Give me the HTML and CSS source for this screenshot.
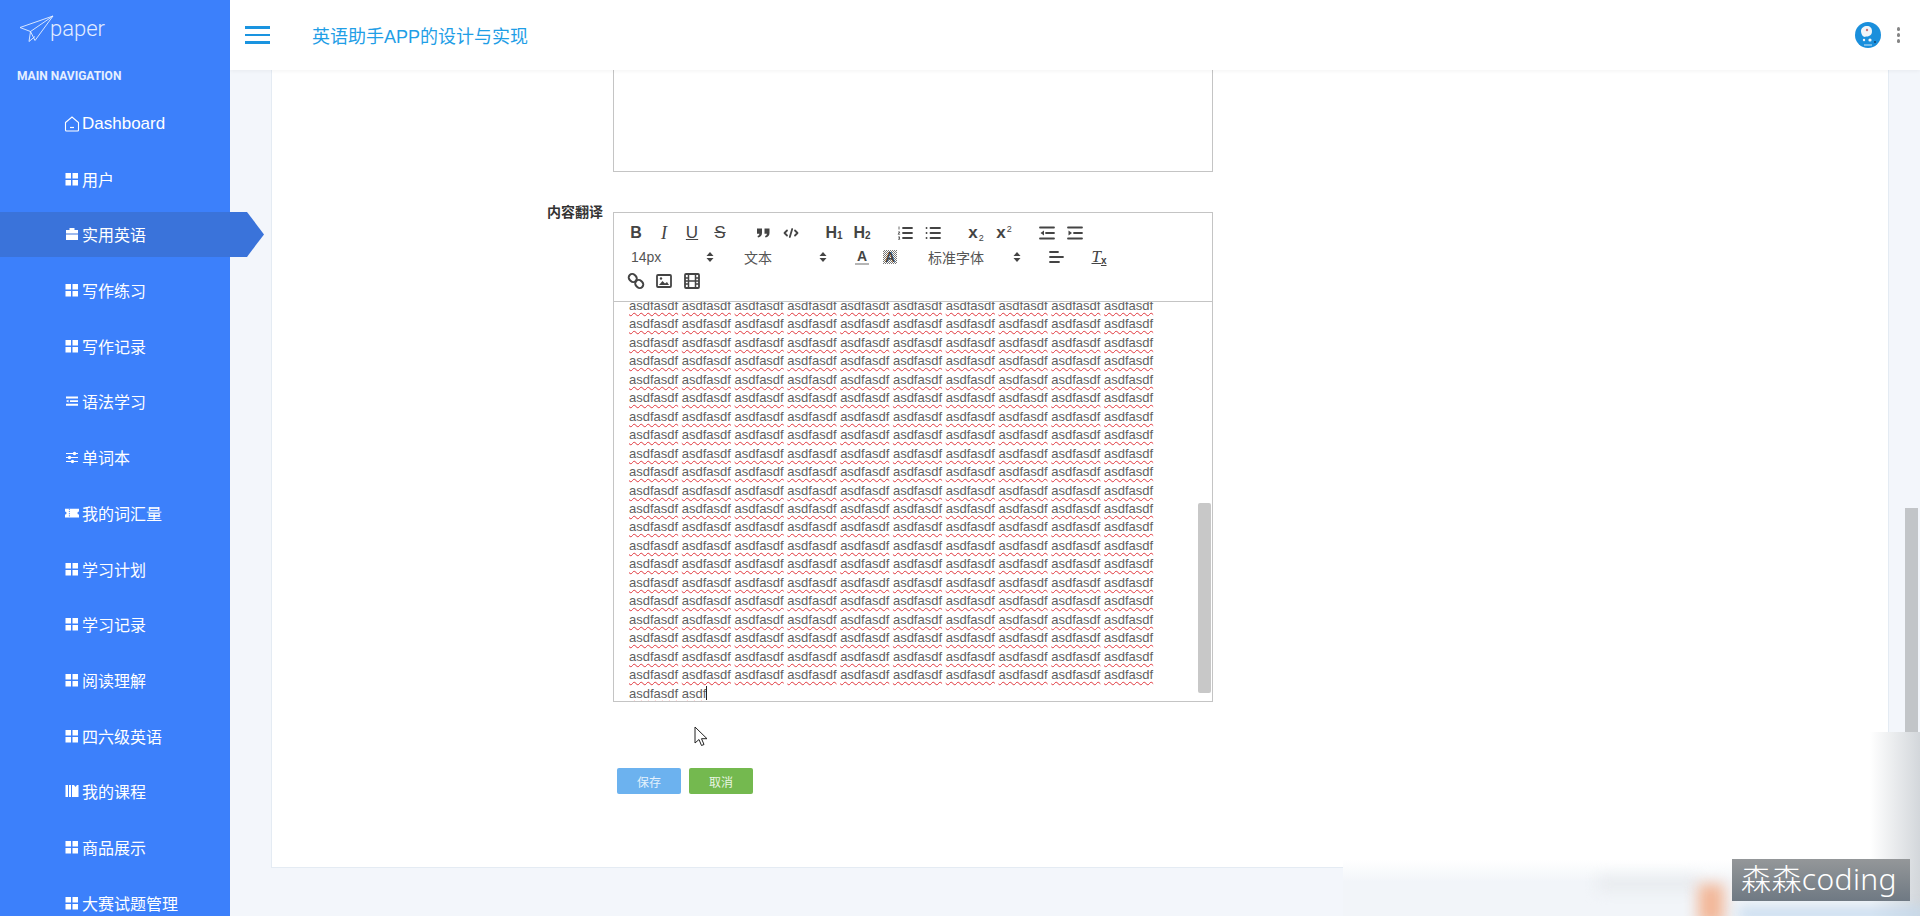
FILE: index.html
```html
<!DOCTYPE html>
<html lang="zh">
<head>
    <meta charset="UTF-8">
    <title>英语助手APP的设计与实现</title>
    <link rel="stylesheet" href="styles.css">
</head>
<body>

<svg class="icon-defs" width="0" height="0">
    <symbol id="i-grid" viewBox="0 0 14 14"><path d="M0.5 1h5.5v5.5h-5.5zM7.5 1h5.5v5.5h-5.5zM0.5 8h5.5v5.5h-5.5zM7.5 8h5.5v5.5h-5.5z" fill="#fff"/></symbol>
    <symbol id="i-home" viewBox="0 0 16 16"><path d="M1.5 6.5L8 1l6.5 5.5v7.5a1 1 0 0 1-1 1h-11a1 1 0 0 1-1-1z" fill="none" stroke="#fff" stroke-width="1.1"/><path d="M6 11.5h4" stroke="#fff" stroke-width="1.2"/></symbol>
    <symbol id="i-case" viewBox="0 0 14 14"><path d="M4.5 3V1h5V3h3.5v3.5H1V3zM1 7.5h12V13H1z" fill="#fff"/></symbol>
    <symbol id="i-list" viewBox="0 0 14 14"><path d="M1 2.5h12v2H1zM5 6.2h8v1.8H5zM1 9.8h12v2H1zM1 7.1l2.5-1.3v2.6z" fill="#fff"/></symbol>
    <symbol id="i-sliders" viewBox="0 0 14 14"><path d="M1 3.5h12M1 7.5h12M1 11.5h12" stroke="#fff" stroke-width="1.1"/><circle cx="9.5" cy="3.5" r="1.7" fill="#fff"/><circle cx="4.5" cy="7.5" r="1.7" fill="#fff"/><circle cx="7.5" cy="11.5" r="1.7" fill="#fff"/></symbol>
    <symbol id="i-ticket" viewBox="0 0 16 14"><path d="M0 2h16v3.2a1.8 1.8 0 0 0 0 3.6V12H0V8.8a1.8 1.8 0 0 0 0-3.6z" fill="#fff"/><path d="M5 2v10" stroke="#3c80fb" stroke-width="1" stroke-dasharray="1.5 1"/></symbol>
    <symbol id="i-book" viewBox="0 0 14 14"><path d="M0.5 1h2.5v12H0.5zM4 1h2v12H4zM7 1h2l1.5 2L12 1h1.5v12H7z" fill="#fff"/></symbol>
</svg>

<aside class="sidebar">
    <div class="logo">
        <svg class="logo-plane" width="36" height="30" viewBox="0 0 36 30">
            <path d="M1 12.5L34 1 16 25.5 11.5 16.5zM34 1L11.5 16.5 10 26.5 16 21.5" fill="none" stroke="#e8f0ff" stroke-width="0.9" stroke-linejoin="round"/>
        </svg>
        <span class="logo-text">paper</span>
    </div>
    <div class="nav-title">MAIN NAVIGATION</div>
    <ul class="nav">
        <li class="nav-item nav-dash"><svg class="nav-icon"><use href="#i-home"/></svg>Dashboard</li>
        <li class="nav-item"><svg class="nav-icon"><use href="#i-grid"/></svg>用户</li>
        <li class="nav-item active"><svg class="nav-icon"><use href="#i-case"/></svg>实用英语</li>
        <li class="nav-item"><svg class="nav-icon"><use href="#i-grid"/></svg>写作练习</li>
        <li class="nav-item"><svg class="nav-icon"><use href="#i-grid"/></svg>写作记录</li>
        <li class="nav-item"><svg class="nav-icon"><use href="#i-list"/></svg>语法学习</li>
        <li class="nav-item"><svg class="nav-icon"><use href="#i-sliders"/></svg>单词本</li>
        <li class="nav-item"><svg class="nav-icon"><use href="#i-ticket"/></svg>我的词汇量</li>
        <li class="nav-item"><svg class="nav-icon"><use href="#i-grid"/></svg>学习计划</li>
        <li class="nav-item"><svg class="nav-icon"><use href="#i-grid"/></svg>学习记录</li>
        <li class="nav-item"><svg class="nav-icon"><use href="#i-grid"/></svg>阅读理解</li>
        <li class="nav-item"><svg class="nav-icon"><use href="#i-grid"/></svg>四六级英语</li>
        <li class="nav-item"><svg class="nav-icon"><use href="#i-book"/></svg>我的课程</li>
        <li class="nav-item"><svg class="nav-icon"><use href="#i-grid"/></svg>商品展示</li>
        <li class="nav-item"><svg class="nav-icon"><use href="#i-grid"/></svg>大赛试题管理</li>
    </ul>
</aside>

<div class="main">
    <header class="topbar">
        <div class="burger"><span></span><span></span><span></span></div>
        <h1 class="page-title">英语助手APP的设计与实现</h1>
        <div class="topbar-right">
            <svg class="avatar" width="26" height="26" viewBox="0 0 26 26">
                <circle cx="13" cy="13" r="13" fill="#1a8fdc"/>
                <path d="M6 9c0-3 3-5 6-5s5 2 5 5-1 4-3 5c-2 1-3 0-4 1-2 0-4-3-4-6z" fill="#f2f5f8"/>
                <circle cx="12" cy="8" r="1.2" fill="#c9737a"/>
                <circle cx="9" cy="18" r="1.2" fill="#f2f5f8"/>
                <circle cx="15" cy="18" r="1.6" fill="#f2f5f8"/>
                <circle cx="20" cy="20" r="1" fill="#12406b"/>
                <path d="M9 23h8" stroke="#cfe6f7" stroke-width="1"/>
            </svg>
            <div class="more-dots"><span></span><span></span><span></span></div>
        </div>
    </header>

    <main class="content">
        <section class="card">
            <div class="form-row">
                <label class="form-label"></label>
                <div class="blank-box"></div>
            </div>

            <div class="form-row">
                <label class="form-label">内容翻译</label>
                <div class="editor">
                    <div class="toolbar">
                        <span class="formats">
                            <button class="tb tb-b">B</button>
                            <button class="tb tb-i">I</button>
                            <button class="tb tb-u">U</button>
                            <button class="tb tb-s">S</button>
                        </span>
                        <span class="formats">
                            <button class="tb"><svg width="18" height="18" viewBox="0 0 18 18"><path d="M3 4.5h5v4.5c0 2.5-1.5 4-4 4.5l-.5-1.5c1.1-.3 1.9-1 1.9-2.2H3zM10.5 4.5h5v4.5c0 2.5-1.5 4-4 4.5l-.5-1.5c1.1-.3 1.9-1 1.9-2.2h-2.4z" fill="#444"/></svg></button>
                            <button class="tb"><svg width="18" height="18" viewBox="0 0 18 18"><path d="M5 6.5L2.5 9 5 11.5M13 6.5L15.5 9 13 11.5M10.2 5L7.8 13" fill="none" stroke="#444" stroke-width="1.8" stroke-linecap="round" stroke-linejoin="round"/></svg></button>
                        </span>
                        <span class="formats">
                            <button class="tb tb-h">H<small>1</small></button>
                            <button class="tb tb-h">H<small>2</small></button>
                        </span>
                        <span class="formats">
                            <button class="tb"><svg width="18" height="18" viewBox="0 0 18 18"><path d="M7 4h9M7 9h9M7 14h9" stroke="#444" stroke-width="1.8" stroke-linecap="round"/><path d="M3 2.5v3M2 8h2l-2 2.2h2.2M2 13h2l-1 1 1 1.2H2" fill="none" stroke="#444" stroke-width="0.8"/></svg></button>
                            <button class="tb"><svg width="18" height="18" viewBox="0 0 18 18"><path d="M6.5 4H16M6.5 9H16M6.5 14H16M2.5 4h.1M2.5 9h.1M2.5 14h.1" stroke="#444" stroke-width="1.8" stroke-linecap="round"/></svg></button>
                        </span>
                        <span class="formats">
                            <button class="tb tb-script">x<small class="low">2</small></button>
                            <button class="tb tb-script">x<small class="high">2</small></button>
                        </span>
                        <span class="formats">
                            <button class="tb"><svg width="18" height="18" viewBox="0 0 18 18"><path d="M2 3.5h14M8 9h8M2 14.5h14" stroke="#444" stroke-width="1.8" stroke-linecap="round"/><path d="M6 6.5L2.5 9 6 11.5z" fill="#444"/></svg></button>
                            <button class="tb"><svg width="18" height="18" viewBox="0 0 18 18"><path d="M2 3.5h14M8 9h8M2 14.5h14" stroke="#444" stroke-width="1.8" stroke-linecap="round"/><path d="M2.5 6.5L6 9 2.5 11.5z" fill="#444"/></svg></button>
                        </span>
                        <span class="formats">
                            <span class="picker">14px<svg class="picker-arrow" width="8" height="12" viewBox="0 0 8 12"><path d="M4 1l3.5 4H.5zM4 11L.5 7h7z" fill="#444"/></svg></span>
                        </span>
                        <span class="formats">
                            <span class="picker">文本<svg class="picker-arrow" width="8" height="12" viewBox="0 0 8 12"><path d="M4 1l3.5 4H.5zM4 11L.5 7h7z" fill="#444"/></svg></span>
                        </span>
                        <span class="formats">
                            <button class="tb tb-color"><span>A</span></button>
                            <button class="tb tb-bg"><span>A</span></button>
                        </span>
                        <span class="formats">
                            <span class="picker picker-font">标准字体<svg class="picker-arrow" width="8" height="12" viewBox="0 0 8 12"><path d="M4 1l3.5 4H.5zM4 11L.5 7h7z" fill="#444"/></svg></span>
                        </span>
                        <span class="formats">
                            <button class="tb"><svg width="18" height="18" viewBox="0 0 18 18"><path d="M3 4h8M3 9h13M3 14h9" stroke="#444" stroke-width="1.8" stroke-linecap="round"/></svg></button>
                        </span>
                        <span class="formats">
                            <button class="tb tb-clean">T<small>x</small></button>
                        </span>
                        <span class="formats">
                            <button class="tb"><svg width="18" height="18" viewBox="0 0 18 18"><rect x="1.5" y="2.5" width="8.5" height="7" rx="3.5" transform="rotate(45 5.75 6)" fill="none" stroke="#444" stroke-width="2"/><rect x="8" y="8.5" width="8.5" height="7" rx="3.5" transform="rotate(45 12.25 12)" fill="none" stroke="#444" stroke-width="2"/></svg></button>
                            <button class="tb"><svg width="18" height="18" viewBox="0 0 18 18"><rect x="2" y="3" width="14" height="12" rx="1" fill="none" stroke="#444" stroke-width="1.8"/><path d="M4 13l3.5-4 2.5 2.5 2-1.5 2 3z" fill="#444"/><circle cx="6" cy="6.5" r="1.2" fill="#444"/></svg></button>
                            <button class="tb"><svg width="18" height="18" viewBox="0 0 18 18"><rect x="2" y="2" width="14" height="14" rx="1" fill="none" stroke="#444" stroke-width="1.8"/><path d="M5.5 2v14M12.5 2v14M2 6h3.5M2 9h14M2 12h3.5M12.5 6H16M12.5 12H16" fill="none" stroke="#444" stroke-width="1.5"/></svg></button>
                        </span>
                    </div>
                    <div class="editor-body">
                        <p class="editor-text">
                            <u>asdfasdf</u> <u>asdfasdf</u> <u>asdfasdf</u> <u>asdfasdf</u> <u>asdfasdf</u> <u>asdfasdf</u> <u>asdfasdf</u> <u>asdfasdf</u> <u>asdfasdf</u> <u>asdfasdf</u>
                            <u>asdfasdf</u> <u>asdfasdf</u> <u>asdfasdf</u> <u>asdfasdf</u> <u>asdfasdf</u> <u>asdfasdf</u> <u>asdfasdf</u> <u>asdfasdf</u> <u>asdfasdf</u> <u>asdfasdf</u>
                            <u>asdfasdf</u> <u>asdfasdf</u> <u>asdfasdf</u> <u>asdfasdf</u> <u>asdfasdf</u> <u>asdfasdf</u> <u>asdfasdf</u> <u>asdfasdf</u> <u>asdfasdf</u> <u>asdfasdf</u>
                            <u>asdfasdf</u> <u>asdfasdf</u> <u>asdfasdf</u> <u>asdfasdf</u> <u>asdfasdf</u> <u>asdfasdf</u> <u>asdfasdf</u> <u>asdfasdf</u> <u>asdfasdf</u> <u>asdfasdf</u>
                            <u>asdfasdf</u> <u>asdfasdf</u> <u>asdfasdf</u> <u>asdfasdf</u> <u>asdfasdf</u> <u>asdfasdf</u> <u>asdfasdf</u> <u>asdfasdf</u> <u>asdfasdf</u> <u>asdfasdf</u>
                            <u>asdfasdf</u> <u>asdfasdf</u> <u>asdfasdf</u> <u>asdfasdf</u> <u>asdfasdf</u> <u>asdfasdf</u> <u>asdfasdf</u> <u>asdfasdf</u> <u>asdfasdf</u> <u>asdfasdf</u>
                            <u>asdfasdf</u> <u>asdfasdf</u> <u>asdfasdf</u> <u>asdfasdf</u> <u>asdfasdf</u> <u>asdfasdf</u> <u>asdfasdf</u> <u>asdfasdf</u> <u>asdfasdf</u> <u>asdfasdf</u>
                            <u>asdfasdf</u> <u>asdfasdf</u> <u>asdfasdf</u> <u>asdfasdf</u> <u>asdfasdf</u> <u>asdfasdf</u> <u>asdfasdf</u> <u>asdfasdf</u> <u>asdfasdf</u> <u>asdfasdf</u>
                            <u>asdfasdf</u> <u>asdfasdf</u> <u>asdfasdf</u> <u>asdfasdf</u> <u>asdfasdf</u> <u>asdfasdf</u> <u>asdfasdf</u> <u>asdfasdf</u> <u>asdfasdf</u> <u>asdfasdf</u>
                            <u>asdfasdf</u> <u>asdfasdf</u> <u>asdfasdf</u> <u>asdfasdf</u> <u>asdfasdf</u> <u>asdfasdf</u> <u>asdfasdf</u> <u>asdfasdf</u> <u>asdfasdf</u> <u>asdfasdf</u>
                            <u>asdfasdf</u> <u>asdfasdf</u> <u>asdfasdf</u> <u>asdfasdf</u> <u>asdfasdf</u> <u>asdfasdf</u> <u>asdfasdf</u> <u>asdfasdf</u> <u>asdfasdf</u> <u>asdfasdf</u>
                            <u>asdfasdf</u> <u>asdfasdf</u> <u>asdfasdf</u> <u>asdfasdf</u> <u>asdfasdf</u> <u>asdfasdf</u> <u>asdfasdf</u> <u>asdfasdf</u> <u>asdfasdf</u> <u>asdfasdf</u>
                            <u>asdfasdf</u> <u>asdfasdf</u> <u>asdfasdf</u> <u>asdfasdf</u> <u>asdfasdf</u> <u>asdfasdf</u> <u>asdfasdf</u> <u>asdfasdf</u> <u>asdfasdf</u> <u>asdfasdf</u>
                            <u>asdfasdf</u> <u>asdfasdf</u> <u>asdfasdf</u> <u>asdfasdf</u> <u>asdfasdf</u> <u>asdfasdf</u> <u>asdfasdf</u> <u>asdfasdf</u> <u>asdfasdf</u> <u>asdfasdf</u>
                            <u>asdfasdf</u> <u>asdfasdf</u> <u>asdfasdf</u> <u>asdfasdf</u> <u>asdfasdf</u> <u>asdfasdf</u> <u>asdfasdf</u> <u>asdfasdf</u> <u>asdfasdf</u> <u>asdfasdf</u>
                            <u>asdfasdf</u> <u>asdfasdf</u> <u>asdfasdf</u> <u>asdfasdf</u> <u>asdfasdf</u> <u>asdfasdf</u> <u>asdfasdf</u> <u>asdfasdf</u> <u>asdfasdf</u> <u>asdfasdf</u>
                            <u>asdfasdf</u> <u>asdfasdf</u> <u>asdfasdf</u> <u>asdfasdf</u> <u>asdfasdf</u> <u>asdfasdf</u> <u>asdfasdf</u> <u>asdfasdf</u> <u>asdfasdf</u> <u>asdfasdf</u>
                            <u>asdfasdf</u> <u>asdfasdf</u> <u>asdfasdf</u> <u>asdfasdf</u> <u>asdfasdf</u> <u>asdfasdf</u> <u>asdfasdf</u> <u>asdfasdf</u> <u>asdfasdf</u> <u>asdfasdf</u>
                            <u>asdfasdf</u> <u>asdfasdf</u> <u>asdfasdf</u> <u>asdfasdf</u> <u>asdfasdf</u> <u>asdfasdf</u> <u>asdfasdf</u> <u>asdfasdf</u> <u>asdfasdf</u> <u>asdfasdf</u>
                            <u>asdfasdf</u> <u>asdfasdf</u> <u>asdfasdf</u> <u>asdfasdf</u> <u>asdfasdf</u> <u>asdfasdf</u> <u>asdfasdf</u> <u>asdfasdf</u> <u>asdfasdf</u> <u>asdfasdf</u>
                            <u>asdfasdf</u> <u>asdfasdf</u> <u>asdfasdf</u> <u>asdfasdf</u> <u>asdfasdf</u> <u>asdfasdf</u> <u>asdfasdf</u> <u>asdfasdf</u> <u>asdfasdf</u> <u>asdfasdf</u>
                            <u>asdfasdf</u> <u>asdf</u><span class="caret"></span>
                        </p>
                        <div class="editor-scroll"></div>
                    </div>
                </div>
            </div>

            <div class="form-actions">
                <button class="btn btn-save">保存</button>
                <button class="btn btn-cancel">取消</button>
            </div>
        </section>
    </main>
</div>

<div class="page-scroll"></div>

<svg class="cursor" width="16" height="22" viewBox="0 0 16 22">
    <path d="M1 1v16l4-3.5 2.5 6 2.5-1-2.5-5.8h5.5z" fill="#fff" stroke="#222" stroke-width="1"/>
</svg>

<div class="video-patch">
    <div class="blob blob-grey"></div>
    <div class="blob blob-orange"></div>
    <div class="blob blob-blue"></div>
    <div class="watermark">森森coding</div>
</div>

</body>
</html>
```

FILE: styles.css
```css
* {
    box-sizing: border-box;
}

html, body {
    height: 100%;
}

body {
    margin: 0;
    display: flex;
    overflow: hidden;
    position: relative;
    font-family: "Liberation Sans", "Noto Sans CJK SC", sans-serif;
    background-color: #f3f6fb;
}

.icon-defs {
    position: absolute;
}

/* sidebar */
.sidebar {
    width: 230px;
    flex-shrink: 0;
    background-color: #3c80fb;
    color: #fff;
    position: relative;
    z-index: 2;
}

.logo {
    height: 61px;
    display: flex;
    align-items: flex-start;
    padding: 15px 0 0 19px;
}

.logo-text {
    font-family: Roboto, sans-serif;
    font-weight: 300;
    font-size: 22px;
    line-height: 28px;
    margin-left: -5px;
    color: #e3edff;
}

.nav-title {
    height: 30px;
    line-height: 30px;
    padding-left: 17px;
    font-family: Roboto, sans-serif;
    font-weight: 700;
    font-size: 12px;
    color: #e6efff;
}

.nav {
    list-style: none;
    margin: 9.5px 0 0;
    padding: 0;
    display: flex;
    flex-direction: column;
    gap: 10.7px;
}

.nav-item {
    height: 45px;
    flex-shrink: 0;
    display: flex;
    align-items: center;
    padding-left: 65px;
    font-size: 16px;
}

.nav-dash {
    font-size: 17px;
    padding-top: 2px;
}

.nav-icon {
    width: 14px;
    height: 14px;
    margin-right: 3px;
    flex-shrink: 0;
}

.nav-dash .nav-icon {
    width: 16px;
    height: 16px;
    margin-left: -1px;
    margin-right: 2px;
}

.nav-item.active {
    width: 264px;
    background-color: #3a73da;
    clip-path: polygon(0 0, 247px 0, 100% 50%, 247px 100%, 0 100%);
}

/* main column */
.main {
    flex: 1;
    min-width: 0;
    display: flex;
    flex-direction: column;
}

.topbar {
    height: 70px;
    flex-shrink: 0;
    background-color: #fff;
    display: flex;
    align-items: center;
    padding: 0 20px 0 15px;
    box-shadow: 0 1px 4px rgba(0, 0, 0, 0.05);
    position: relative;
    z-index: 1;
}

.burger {
    width: 25px;
    display: flex;
    flex-direction: column;
    gap: 5px;
}

.burger span {
    height: 2.5px;
    background-color: #1a94e0;
}

.page-title {
    margin: 0 0 0 42px;
    font-size: 18px;
    font-weight: 400;
    color: #1f9ee6;
}

.topbar-right {
    margin-left: auto;
    display: flex;
    align-items: center;
    gap: 16px;
}

.more-dots {
    display: flex;
    flex-direction: column;
    gap: 2.5px;
}

.more-dots span {
    width: 3.5px;
    height: 3.5px;
    border-radius: 50%;
    background-color: #858585;
}

.content {
    padding: 0 31px 0 41px;
}

.card {
    background-color: #fff;
    border-left: 1px solid #e4ebf3;
    border-right: 1px solid #e4ebf3;
    border-bottom: 1px solid #e4ebf3;
    padding-bottom: 73px;
}

.form-row {
    display: flex;
    align-items: flex-start;
    margin-bottom: 40px;
}

.form-label {
    width: 331px;
    margin: -10px 10px 0 0;
    flex-shrink: 0;
    text-align: right;
    font-size: 14px;
    font-weight: 700;
    line-height: 20px;
    color: #333;
}

.blank-box {
    width: 600px;
    height: 102px;
    border: 1px solid #c4c4c4;
    border-top: none;
}

/* editor */
.editor {
    width: 600px;
    border: 1px solid #c4c4c4;
}

.toolbar {
    display: flex;
    flex-wrap: wrap;
    padding: 8px;
    border-bottom: 1px solid #c4c4c4;
    color: #444;
}

.formats {
    display: flex;
    margin-right: 15px;
}

.tb {
    width: 28px;
    height: 24px;
    padding: 0;
    border: none;
    background: none;
    display: flex;
    align-items: center;
    justify-content: center;
    font-family: "Liberation Sans", sans-serif;
    font-size: 16px;
    color: #444;
}

.tb-b {
    font-size: 16px;
    font-weight: 700;
}

.tb-i {
    font-family: "Liberation Serif", serif;
    font-style: italic;
    font-size: 18px;
}

.tb-u {
    font-size: 17px;
    text-decoration: underline;
}

.tb-s {
    font-size: 17px;
    text-decoration: line-through;
}

.tb-h {
    font-size: 16px;
    font-weight: 700;
}

.tb-h small {
    font-size: 10px;
    font-weight: 700;
    margin-top: 5px;
}

.tb-script {
    font-weight: 700;
    font-size: 17px;
}

.tb-script small {
    font-size: 9px;
    font-weight: 400;
    margin-left: 1px;
}

.tb-script .low {
    margin-top: 9px;
}

.tb-script .high {
    margin-top: -9px;
}

.tb-color span {
    width: 14px;
    font-size: 14px;
    font-weight: 700;
    line-height: 13px;
    text-align: center;
    border-bottom: 2px solid #b5b5b5;
}

.tb-bg span {
    width: 14px;
    height: 14px;
    font-size: 14px;
    font-weight: 700;
    line-height: 14px;
    background-image: repeating-conic-gradient(#777 0 25%, #fff 0 50%);
    background-size: 2px 2px;
}

.tb-clean {
    font-family: "Liberation Serif", serif;
    font-style: italic;
    font-size: 17px;
    text-decoration: underline;
    text-decoration-thickness: 1px;
}

.tb-clean small {
    font-family: "Liberation Sans", sans-serif;
    font-style: normal;
    font-weight: 700;
    font-size: 10px;
    margin-top: 7px;
}

.picker {
    width: 98px;
    height: 24px;
    padding: 0 6px 0 9px;
    display: flex;
    align-items: center;
    justify-content: space-between;
    font-size: 14px;
    color: #555;
}

.picker-font {
    width: 108px;
}

.editor-body {
    height: 399px;
    position: relative;
    overflow: hidden;
    display: flex;
    flex-direction: column;
    justify-content: flex-end;
}

.editor-text {
    margin: 0 0 -2px;
    padding: 0 30px 0 15px;
    font-size: 13px;
    line-height: 18.46px;
    color: #5f5f5f;
}

.editor-text u {
    text-decoration: underline wavy #e0363c 1.3px;
    text-underline-offset: 2px;
}

.caret {
    display: inline-block;
    width: 1px;
    height: 14px;
    vertical-align: -2px;
    background-color: #222;
}

.editor-scroll {
    position: absolute;
    top: 201px;
    right: 1px;
    width: 13px;
    height: 190px;
    border-radius: 2px;
    background-color: #c8c8c8;
}

.form-actions {
    display: flex;
    gap: 8px;
    margin: 66px 0 0 345px;
}

.btn {
    width: 64px;
    height: 26px;
    padding: 0;
    border: none;
    border-radius: 2px;
    font-family: inherit;
    font-size: 12px;
}

.btn-save {
    background-color: #6cb2ef;
    color: #e4f1fc;
}

.btn-cancel {
    background-color: #74b94f;
    color: #e9f5e2;
}

/* things lying over the page */
.page-scroll {
    position: absolute;
    top: 508px;
    right: 2px;
    width: 13px;
    height: 300px;
    background-color: #c2c5c8;
}

.cursor {
    position: absolute;
    left: 694px;
    top: 726px;
    z-index: 3;
}

.video-patch {
    position: absolute;
    right: 0;
    bottom: 0;
    width: 577px;
    height: 184px;
    overflow: hidden;
    background-image:
        linear-gradient(to right, rgba(211, 215, 219, 0) calc(100% - 50px), #d3d7db),
        linear-gradient(to bottom, #fff 128px, #f2f5f9 150px);
    z-index: 3;
}

.blob {
    position: absolute;
    filter: blur(7px);
}

.blob-grey {
    left: 255px;
    top: 145px;
    width: 100px;
    height: 14px;
    background-color: #e8ebee;
}

.blob-orange {
    left: 355px;
    top: 152px;
    width: 26px;
    height: 40px;
    background-color: #f2b798;
}

.blob-blue {
    left: 395px;
    top: 176px;
    width: 190px;
    height: 12px;
    background-color: #c3d9ee;
}

.watermark {
    position: absolute;
    left: 389px;
    top: 127px;
    width: 178px;
    height: 42px;
    padding-left: 9px;
    font-family: "Noto Sans", "Noto Sans CJK SC", sans-serif;
    font-weight: 300;
    font-size: 30px;
    letter-spacing: 0.4px;
    line-height: 40px;
    color: #fff;
    background-image: linear-gradient(to bottom, #949799, #6f7983);
}
```
